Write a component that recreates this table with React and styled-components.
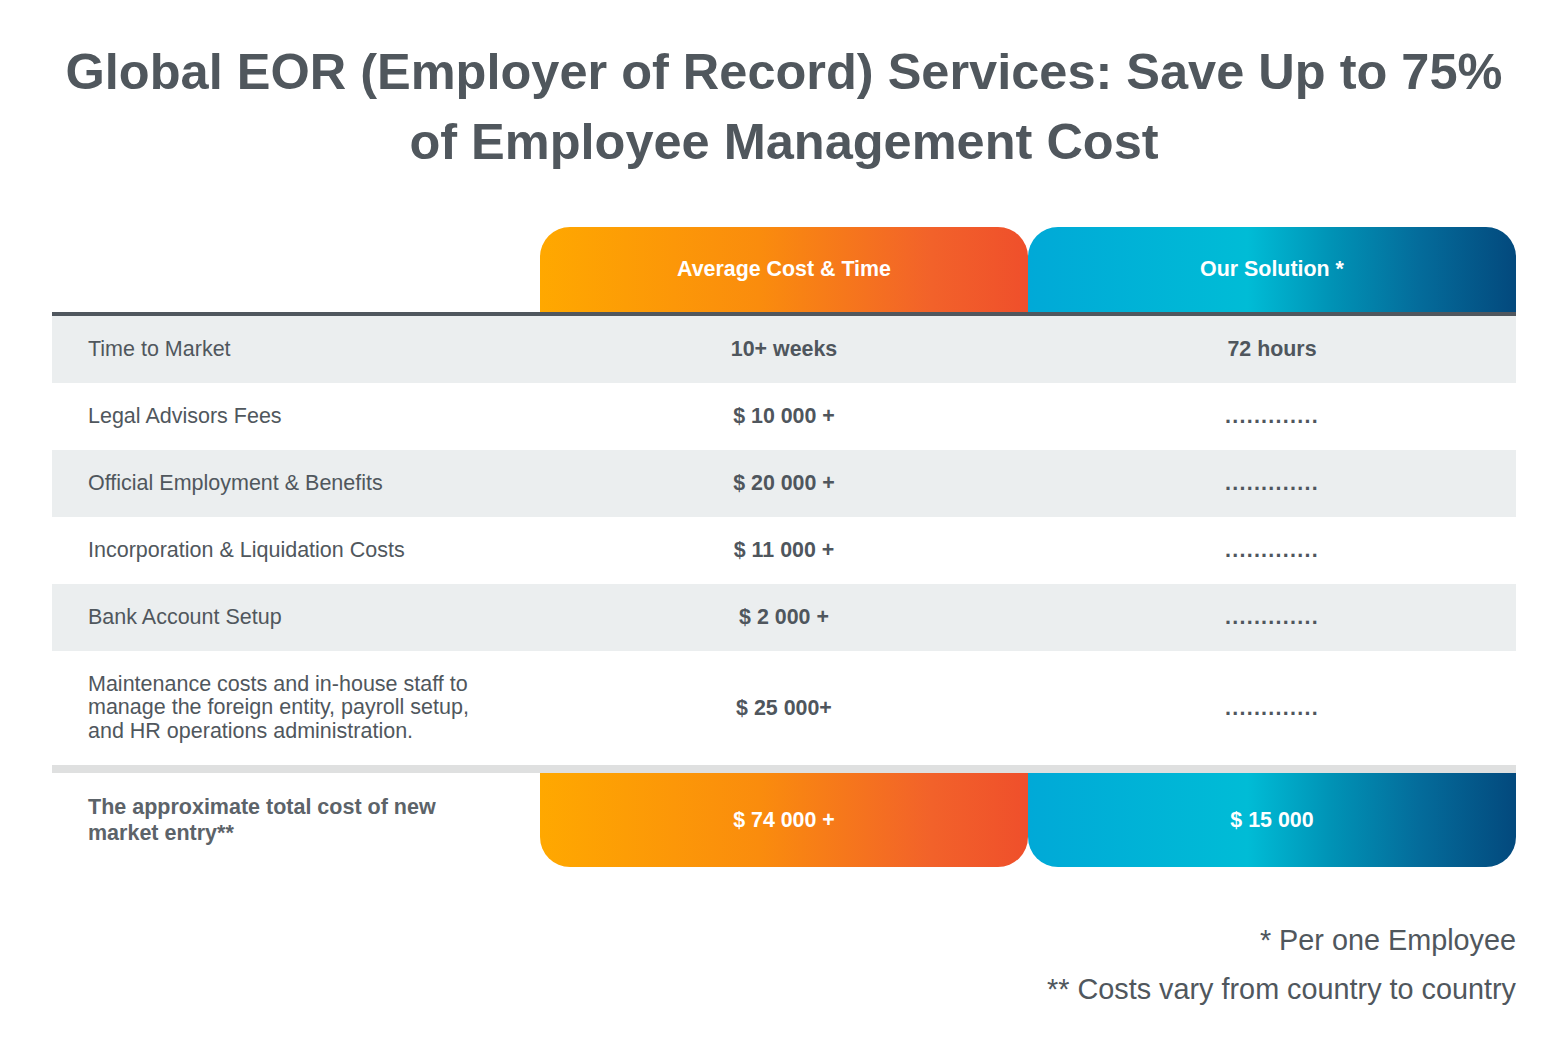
import styled, { createGlobalStyle } from "styled-components";

const GlobalStyle = createGlobalStyle`
  body {
    margin: 0;
    background: #ffffff;
    font-family: "Liberation Sans", Arial, sans-serif;
    color: #50575d;
  }
`;

const orange = "linear-gradient(90deg, #ffa800 0%, #fa8c0d 45%, #f2622a 80%, #ef4f2b 100%)";
const blue =
  "linear-gradient(90deg, #00a9d7 0%, #00bcd6 45%, #0093b6 62%, #046c9b 80%, #03497d 100%)";

const Page = styled.main`
  padding: 37px 50px 40px 52px;
`;

const Title = styled.h1`
  margin: 0 0 50px;
  text-align: center;
  font-size: 50.5px;
  line-height: 70px;
  font-weight: 700;
  color: #50575d;
`;

const Row = styled.div`
  display: grid;
  grid-template-columns: repeat(3, 1fr);
  height: ${(p) => p.$height || 67}px;
  background: ${(p) => (p.$shaded ? "#ebeeef" : "transparent")};
`;

const HeadRow = styled(Row)`
  height: 85px;
  border-bottom: 4px solid #50575e;
`;

const TotalRow = styled(Row)`
  height: 94px;
  border-top: 8px solid #dfe0e0;
`;

const Label = styled.div`
  display: flex;
  align-items: center;
  padding-left: 36px;
  padding-right: 50px;
  font-size: 21.5px;
  line-height: ${(p) => (p.$strong ? 26 : 23.5)}px;
  color: ${(p) => (p.$strong ? "#5c6369" : "#50575d")};
  font-weight: ${(p) => (p.$strong ? 700 : 400)};
`;

const Value = styled.div`
  display: flex;
  align-items: center;
  justify-content: center;
  font-size: 21.4px;
  font-weight: 700;
  color: #4f565d;
  letter-spacing: ${(p) => (p.$dots ? "1.3px" : "0")};
`;

const GradCell = styled.div`
  display: flex;
  align-items: center;
  justify-content: center;
  font-size: 21.4px;
  font-weight: 700;
  color: #ffffff;
  background: ${(p) => (p.$tone === "blue" ? blue : orange)};
  border-radius: ${(p) => (p.$bottom ? "0 0 30px 30px" : "30px 30px 0 0")};
`;

const Notes = styled.div`
  margin-top: 49px;
  text-align: right;
  font-size: 28.8px;
  line-height: 49px;
  color: #50575d;
`;

const rows = [
  { label: "Time to Market", avg: "10+ weeks", ours: "72 hours" },
  { label: "Legal Advisors Fees", avg: "$ 10 000 +" },
  { label: "Official Employment & Benefits", avg: "$ 20 000 +" },
  { label: "Incorporation & Liquidation Costs", avg: "$ 11 000 +" },
  { label: "Bank Account Setup", avg: "$ 2 000 +" },
  {
    label:
      "Maintenance costs and in-house staff to manage the foreign entity, payroll setup, and HR operations administration.",
    avg: "$ 25 000+",
    height: 114,
  },
];

export default function App() {
  return (
    <>
      <GlobalStyle />
      <Page>
        <Title>
          Global EOR (Employer of Record) Services: Save Up to 75%
          <br />
          of Employee Management Cost
        </Title>

        <HeadRow>
          <div />
          <GradCell>Average Cost &amp; Time</GradCell>
          <GradCell $tone="blue">Our Solution *</GradCell>
        </HeadRow>

        {rows.map((r, i) => (
          <Row key={r.label} $shaded={i % 2 === 0} $height={r.height}>
            <Label>{r.label}</Label>
            <Value>{r.avg}</Value>
            {r.ours ? <Value>{r.ours}</Value> : <Value $dots>.............</Value>}
          </Row>
        ))}

        <TotalRow>
          <Label $strong>The approximate total cost of new market entry**</Label>
          <GradCell $bottom>$ 74 000 +</GradCell>
          <GradCell $bottom $tone="blue">
            $ 15 000
          </GradCell>
        </TotalRow>

        <Notes>
          <div>* Per one Employee</div>
          <div>** Costs vary from country to country</div>
        </Notes>
      </Page>
    </>
  );
}
